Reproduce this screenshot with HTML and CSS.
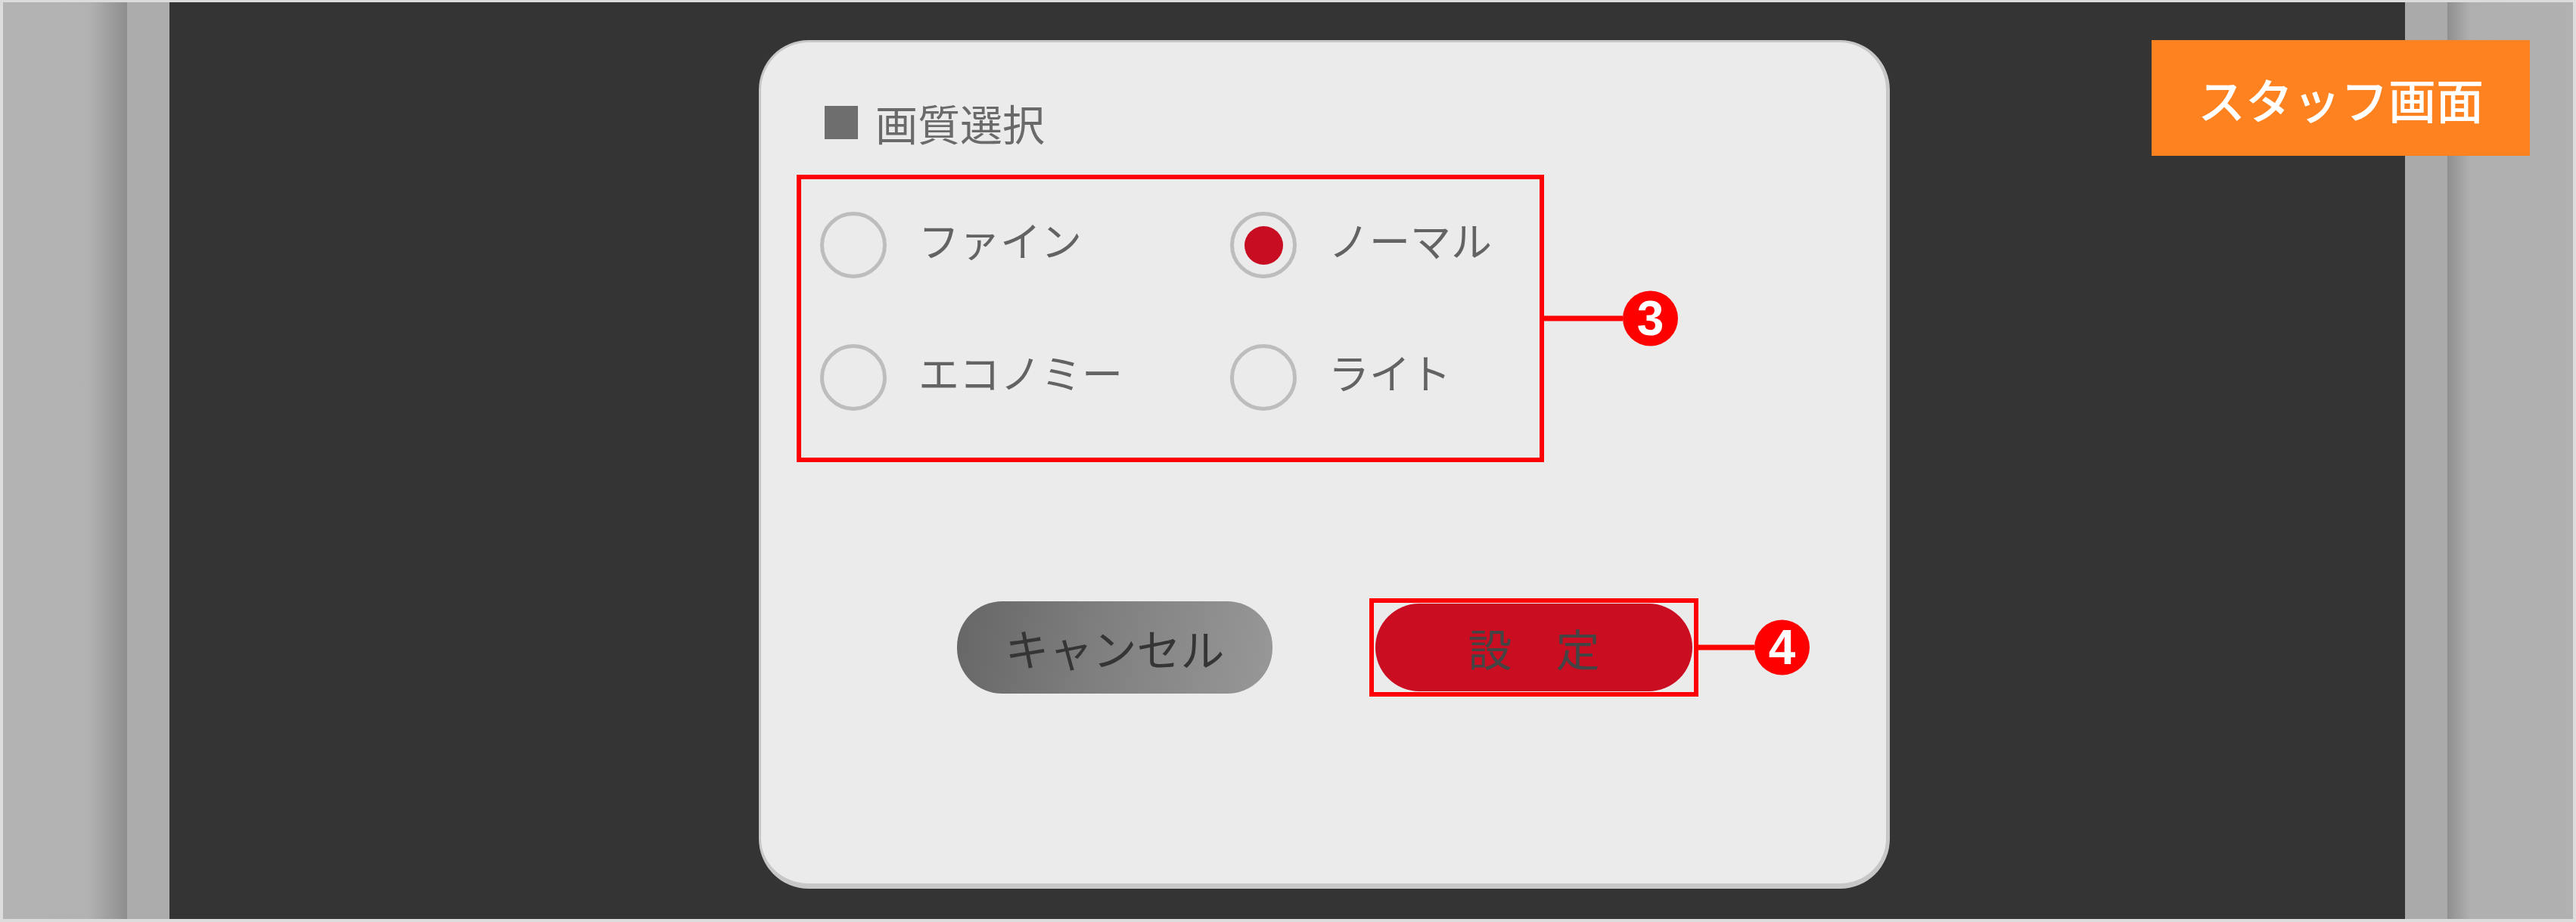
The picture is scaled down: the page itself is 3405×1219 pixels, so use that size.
FILE: index.html
```html
<!DOCTYPE html>
<html lang="ja">
<head>
<meta charset="utf-8">
<title>画質選択</title>
<link rel="stylesheet" href="styles.css">
</head>
<body>
<div class="frame">
  <div class="side side-left"></div>
  <div class="screen">
    <div class="dialog">
      <div class="dialog-title">
        <span class="title-mark"></span>
        <span class="title-text">画質選択</span>
      </div>
      <div class="radio-group highlight">
        <div class="radio"><span class="radio-circle"></span><span class="radio-label">ファイン</span></div>
        <div class="radio"><span class="radio-circle is-checked"><span class="radio-dot"></span></span><span class="radio-label">ノーマル</span></div>
        <div class="radio"><span class="radio-circle"></span><span class="radio-label">エコノミー</span></div>
        <div class="radio"><span class="radio-circle"></span><span class="radio-label">ライト</span></div>
        <div class="callout callout-3"><span class="callout-line"></span><span class="callout-num">3</span></div>
      </div>
      <div class="buttons">
        <button class="btn btn-cancel">キャンセル</button>
        <div class="highlight highlight-btn">
          <button class="btn btn-ok">設　定</button>
          <div class="callout callout-4"><span class="callout-line"></span><span class="callout-num">4</span></div>
        </div>
      </div>
    </div>
  </div>
  <div class="side side-right"></div>
</div>
<div class="badge">スタッフ画面</div>
</body>
</html>
```
FILE: styles.css
```css
* { box-sizing: border-box; }
html, body { margin: 0; padding: 0; }
body {
  width: 3405px;
  height: 1219px;
  overflow: hidden;
  font-family: "Noto Sans CJK JP", "Noto Sans", sans-serif;
  position: relative;
  background: #dedede;
}
.frame {
  display: flex;
  width: 3405px;
  height: 1219px;
  border-style: solid;
  border-color: #dcdcdc;
  border-width: 3px 4px 4px 4px;
}
.side-left {
  width: 220px;
  background: linear-gradient(to right, #b3b3b3 0, #b2b2b2 113px, #8e8e8e 164px, #acacac 164px, #acacac 100%);
}
.side-right {
  width: 222px;
  background: linear-gradient(to right, #aaaaaa 0, #aaaaaa 56px, #8f8f8f 56px, #b0b0b0 86px, #b1b1b1 100%);
}
.screen {
  flex: 1;
  background: #343434;
  padding-top: 50px;
  padding-left: 779px;
}
.dialog {
  width: 1495px;
  height: 1122px;
  background: #ebebeb;
  border-style: solid;
  border-color: #c7c7c7;
  border-width: 3px 5px 7px 3px;
  border-radius: 66px;
  padding: 78px 0 0 47px;
}
.dialog-title {
  display: flex;
  align-items: center;
  height: 55px;
  margin-left: 37px;
}
.title-mark {
  width: 44px;
  height: 44px;
  background: #6e6e6e;
  margin-right: 23px;
}
.title-text {
  font-size: 56px;
  line-height: 1;
  color: #6a6a6a;
}
.highlight {
  border: 6px solid #ff0000;
  position: relative;
}
.radio-group {
  margin-top: 42px;
  width: 988px;
  height: 380px;
  padding: 43px 0 62px 25px;
  display: grid;
  grid-template-columns: 542px 1fr;
  row-gap: 87px;
}
.radio {
  display: flex;
  align-items: center;
  height: 88px;
}
.radio-circle {
  width: 88px;
  height: 88px;
  border: 5px solid #bdbdbd;
  border-radius: 50%;
  display: flex;
  align-items: center;
  justify-content: center;
  flex: none;
}
.radio-dot {
  width: 51px;
  height: 51px;
  border-radius: 50%;
  background: #c80d22;
}
.radio-label {
  margin-left: 42px;
  font-size: 54px;
  line-height: 1;
  color: #636363;
  padding-bottom: 14px;
}
.callout {
  position: absolute;
  top: 50%;
  left: 100%;
  transform: translateY(-50%);
  display: flex;
  align-items: center;
}
.callout-line {
  height: 7px;
  background: #ff0000;
}
.callout-3 .callout-line { width: 104px; }
.callout-4 .callout-line { width: 74px; }
.callout-3, .callout-4 { margin-left: 6px; }
.callout-num {
  width: 73px;
  height: 73px;
  border-radius: 50%;
  background: #ff0000;
  color: #ffffff;
  font-family: "Liberation Sans", Arial, sans-serif;
  font-weight: bold;
  font-size: 64px;
  line-height: 73px;
  text-align: center;
}
.buttons {
  display: flex;
  align-items: center;
  margin-top: 180px;
  margin-left: 212px;
  gap: 128px;
}
.btn {
  border: none;
  border-radius: 60px;
  font-family: "Noto Sans CJK JP", "Noto Sans", sans-serif;
  font-size: 58px;
  line-height: 1;
  padding: 0;
  display: flex;
  align-items: center;
  justify-content: center;
}
.btn-cancel {
  width: 417px;
  height: 122px;
  background: linear-gradient(100deg, #666666 0%, #7f7f7f 45%, #989898 100%);
  color: #353535;
}
.highlight-btn {
  padding: 1px 2px;
}
.btn-ok {
  width: 419px;
  height: 116px;
  background: #cb0d21;
  color: #444444;
}
.badge {
  position: absolute;
  top: 53px;
  left: 2844px;
  width: 500px;
  height: 153px;
  background: #ff8220;
  color: #ffffff;
  font-size: 63px;
  font-weight: 500;
  line-height: 153px;
  text-align: center;
}
```
